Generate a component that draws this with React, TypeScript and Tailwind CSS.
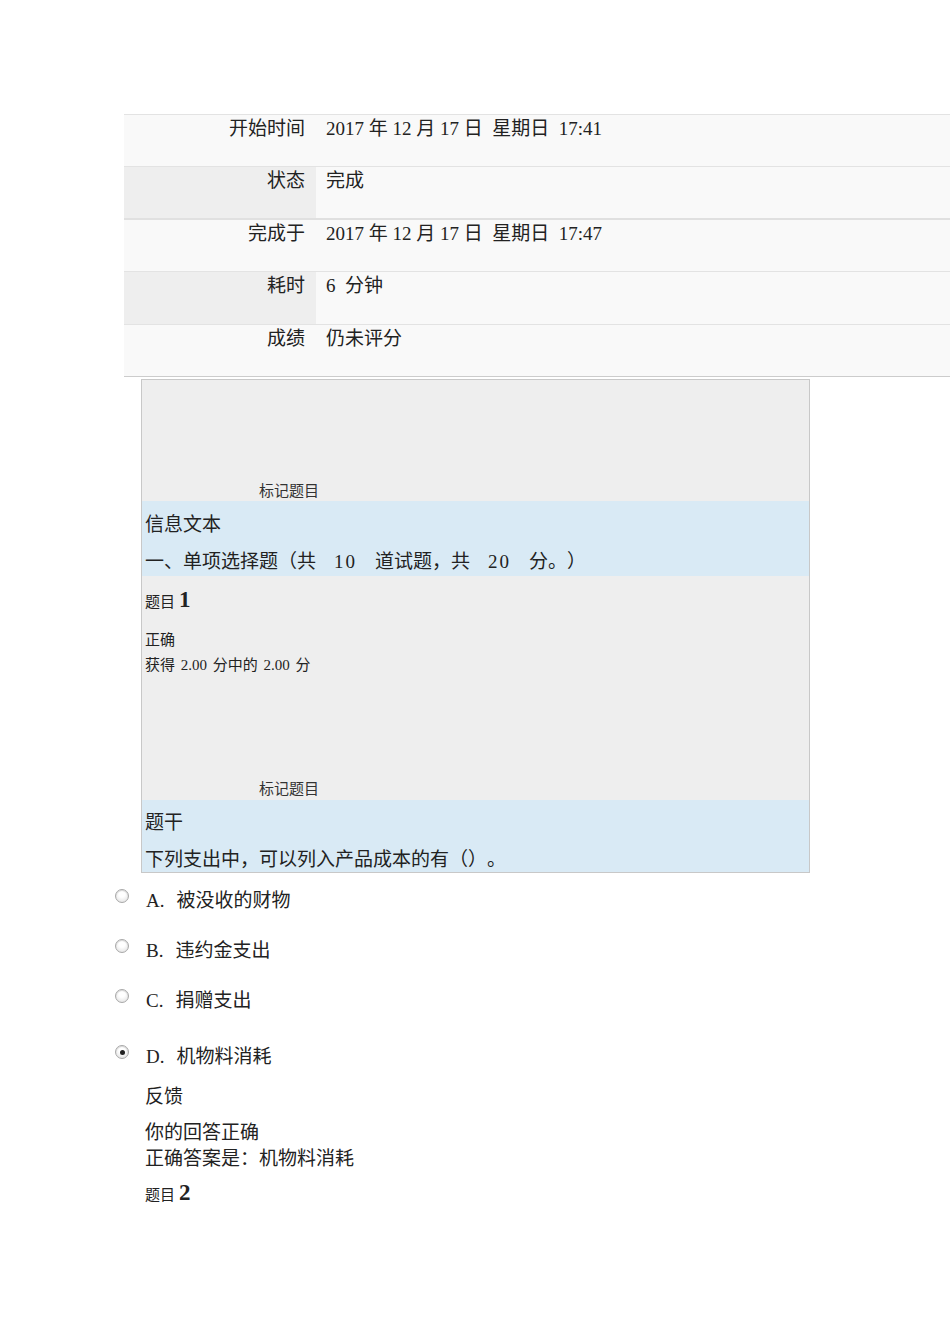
import type { ReactNode } from "react";

const font = "font-['Liberation_Serif','Noto_Sans_CJK_SC',serif] [text-spacing-trim:space-all]";

type Row = { label: string; value: string; shaded: boolean; h: string };

const rows: Row[] = [
  { label: "开始时间", value: "2017 年 12 月 17 日  星期日  17:41", shaded: false, h: "h-[52px]" },
  { label: "状态", value: "完成", shaded: true, h: "h-[52px]" },
  { label: "完成于", value: "2017 年 12 月 17 日  星期日  17:47", shaded: false, h: "h-[53px]" },
  { label: "耗时", value: "6  分钟", shaded: true, h: "h-[53px]" },
  { label: "成绩", value: "仍未评分", shaded: false, h: "h-[52px]" },
];

const Radio = ({ checked }: { checked?: boolean }) => (
  <span className="mt-[-10px] inline-flex h-[14px] w-[14px] shrink-0 items-center justify-center rounded-full border border-[#a8a8a8] bg-[radial-gradient(circle_at_50%_35%,#ffffff_30%,#dcdcdc_100%)] shadow-[inset_0_1px_1px_rgba(0,0,0,0.15)]">
    {checked && <span className="h-[5px] w-[5px] rounded-full bg-[#222]" />}
  </span>
);

const Option = ({ letter, text, checked, className }: { letter: string; text: string; checked?: boolean; className?: string }) => (
  <div className={`flex items-center ${className ?? ""}`}>
    <Radio checked={checked} />
    <span className="ml-[17px] text-[19px] leading-[26px] text-[#222]">
      {letter}
      <span className="ml-[12px]">{text}</span>
    </span>
  </div>
);

const Flag = ({ children }: { children: ReactNode }) => (
  <div className="pl-[117px] text-[15px] leading-[20px] text-[#333]">{children}</div>
);

const Num = ({ children }: { children: ReactNode }) => (
  <span className="mx-[18px] tracking-[2px]">{children}</span>
);

const QuestionNo = ({ n }: { n: number }) => (
  <div className="flex items-end">
    <span className="text-[15px] leading-[20px]">题目</span>
    <span className="ml-[4px] text-[23px] font-bold leading-[24px]">{n}</span>
  </div>
);

export default function App() {
  return (
    <div className={`min-h-[1344px] w-[950px] bg-white ${font} text-[#222]`}>
      <div className="h-[114px]" />
      <div className="ml-[124px] border-b border-[#ccc]">
        {rows.map((row, i) => (
          <div
            key={row.label}
            className={`flex ${row.h} border-t ${i === 2 ? "border-t-2 border-[#e0e0e0]" : "border-[#e3e3e3]"} bg-[#f9f9f9]`}
          >
            <div
              className={`w-[192px] pr-[11px] pt-[1px] text-right text-[19px] leading-[26px] ${row.shaded ? "bg-[#eeeeee]" : ""}`}
            >
              {row.label}
            </div>
            <div className="pl-[10px] pt-[1px] text-[19px] leading-[26px] whitespace-pre">{row.value}</div>
          </div>
        ))}
      </div>

      <div className="ml-[141px] mt-[2px] w-[669px] border border-[#c8c8c8] bg-[#eeeeee]">
        <div className="flex h-[121px] flex-col justify-end">
          <Flag>标记题目</Flag>
        </div>
        <div className="h-[75px] bg-[#d9eaf5] pl-[3px] pt-[11px] text-[19px]">
          <div className="leading-[26px]">信息文本</div>
          <div className="mt-[11px] leading-[26px]">
            一、单项选择题（共<Num>10</Num>道试题，共<Num>20</Num>分。）
          </div>
        </div>
        <div className="flex h-[224px] flex-col pb-[1px] pl-[3px]">
          <div className="pt-[12px]">
            <QuestionNo n={1} />
          </div>
          <div className="mt-[16px] text-[15px] leading-[24px]">正确</div>
          <div className="text-[15px] leading-[26px] [word-spacing:2px]">获得 2.00 分中的 2.00 分</div>
          <div className="-ml-[3px] mt-auto">
            <Flag>标记题目</Flag>
          </div>
        </div>
        <div className="h-[72px] bg-[#d9eaf5] pl-[3px] pt-[10px] text-[19px]">
          <div className="leading-[26px]">题干</div>
          <div className="mt-[11px] leading-[26px]">下列支出中，可以列入产品成本的有（）。</div>
        </div>
      </div>

      <div className="ml-[115px]">
        <Option className="mt-[15px]" letter="A." text="被没收的财物" />
        <Option className="mt-[24px]" letter="B." text="违约金支出" />
        <Option className="mt-[24px]" letter="C." text="捐赠支出" />
        <Option className="mt-[30px]" letter="D." text="机物料消耗" checked />
      </div>

      <div className="ml-[145px]">
        <div className="mt-[14px] text-[19px] leading-[26px]">反馈</div>
        <div className="mt-[10px] text-[19px] leading-[26px]">你的回答正确</div>
        <div className="text-[19px] leading-[26px]">正确答案是：机物料消耗</div>
        <div className="mt-[9px]">
          <QuestionNo n={2} />
        </div>
      </div>
    </div>
  );
}
